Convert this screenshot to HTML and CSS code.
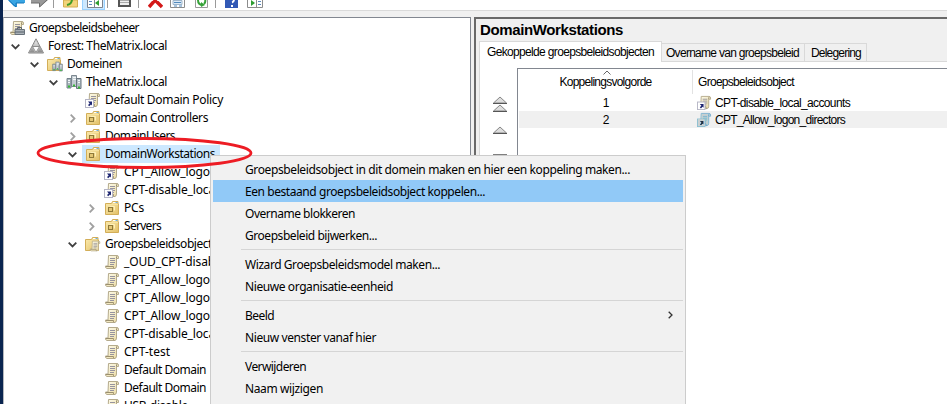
FILE: index.html
```html
<!DOCTYPE html>
<html lang="nl">
<head>
<meta charset="utf-8">
<title>Groepsbeleidsbeheer</title>
<link rel="stylesheet" href="styles.css">
</head>
<body>
<svg class="defs" aria-hidden="true">
  <linearGradient id="paper" x2="1" y2="1"><stop offset="0" stop-color="#fffef0"/><stop offset="1" stop-color="#ead9a0"/></linearGradient>
  <linearGradient id="gold" x2="1" y2="1"><stop offset="0" stop-color="#fcecb0"/><stop offset="1" stop-color="#e2c068"/></linearGradient>
  <linearGradient id="metal" x2="0" y2="1"><stop offset="0" stop-color="#f4f4f4"/><stop offset="1" stop-color="#888"/></linearGradient>
  <symbol id="scroll" viewBox="0 0 16 16">
    <path d="M4.500 1.500H13q2 0 1.500 3h-2v7.500q0 2.500-2 2.500H3q-2-.5-1.500-2.500H4z" fill="url(#paper)" stroke="#b5ab8c"/>
    <path d="M12.500 4.500q-.5-2.500 1-2.500M2 12.500h7.500q-.5 1.500 1 2" fill="none" stroke="#9c906f"/>
    <path d="M6 4.500h5M6 6.500h5M6 8.500h5M6 10.500h4" stroke="#97949e"/>
  </symbol>
  <symbol id="link" viewBox="0 0 16 16">
    <use href="#scroll"/>
    <rect x=".5" y="7.500" width="8" height="8" fill="#fff" stroke="#b5b5c5"/>
    <path d="M3 9.500h4v4L6 12.500l-1.800 1.800-1.200-1.200 1.700-1.700z" fill="#1c2470"/>
  </symbol>
  <symbol id="folder" viewBox="0 0 16 16">
    <path d="M1.500 3.500h6l1-2h5.500v2.500h.5v10.500h-13z" fill="url(#gold)" stroke="#d3ae58"/>
    <path d="M9 2.500h4" stroke="#fff"/><path d="M11.500 2.500h2" stroke="#6ab0e8"/>
  </symbol>
  <symbol id="ou" viewBox="0 0 16 16">
    <use href="#folder"/>
    <path d="M2 4.500h12" stroke="#f8e3a0"/>
    <rect x="4.500" y="7.500" width="4" height="4" fill="#e3c674" stroke="#8f7939"/>
    <path d="M5.500 6.500h5v4" fill="none" stroke="#fff0b8"/>
  </symbol>
  <symbol id="towers" viewBox="0 0 16 16">
    <path d="M5.500 1.500h5v11h-5z" fill="#c3ccd2" stroke="#7c8790"/>
    <path d="M1 4.500h4v9.500H1z" fill="#aab6be" stroke="#75828b"/>
    <path d="M10.500 4.500h4.500v10h-4.500z" fill="#b4bfc6" stroke="#68757e"/>
    <path d="M2 6.500h2M2 8.500h2M7 3.500h3M7 5.500h3M12 6.500h2M12 8.500h2" stroke="#f3f7f8"/>
    <path d="M2 12.500h2M7 11.500h2M12 13.500h2" stroke="#38b838" stroke-width="2"/>
  </symbol>
  <symbol id="domains" viewBox="0 0 16 16">
    <use href="#folder" x="-1"/><use href="#towers" x="5" y="5" width="11" height="11"/>
  </symbol>
  <symbol id="gpos" viewBox="0 0 16 16">
    <use href="#folder" x="-1"/><use href="#scroll" x="4" y="4" width="12" height="12"/>
  </symbol>
  <symbol id="console" viewBox="0 0 16 16">
    <use href="#scroll"/>
    <path d="M6 9.500h9.500v5H6z" fill="#aab1b7" stroke="#68727b"/><path d="M8.500 9V7.500h4V9M6 12h9" fill="none" stroke="#59636c"/>
  </symbol>
  <symbol id="forest" viewBox="0 0 16 16">
    <path d="M8 .8 15.500 15H.5z" fill="#eee" stroke="#858585"/>
    <path d="M8 2 11.500 8.500h-7zM4 9l3 5.500H1.500zM12 9l3 5.500H9z" fill="url(#metal)" stroke="#999" stroke-width=".5"/>
    <path d="M4.500 8.500h7L8 14.500z" fill="#fff" stroke="#777" stroke-width=".8"/>
  </symbol>
  <symbol id="up" viewBox="0 0 16 8"><path d="M8 1 14.500 7H1.500z" fill="#ddd" stroke="#888"/><path d="M1 7.500h14" stroke="#555"/></symbol>
</svg>
<div class="window">
  <div class="toolbar">
    <svg class="tool back" viewBox="0 0 17 9"><path d="M0 0h17v3H9v4L6 6.500z" fill="#39a5e3"/><path d="M.5 0 8 7V3h8" fill="none" stroke="#1474b8"/></svg>
    <svg class="tool forward" viewBox="0 0 17 9"><path d="M0 0h17L9 7V3H0z" fill="#999"/><path d="M0 3h8.500v4L16 0" fill="none" stroke="#6d6d6d"/></svg>
    <i class="split"></i>
    <svg class="tool up" viewBox="0 0 15 9"><path d="M.5 0h14v7H.5z" fill="#f2d47b" stroke="#d4ae50"/><path d="M4 5q5-1 5-6" fill="none" stroke="#3f9c28" stroke-width="2"/></svg>
    <span class="pressed"><svg viewBox="0 0 16 9"><path d="M.5-1h15v8.500H.5z" fill="#fff" stroke="#7c8490"/><path d="M7.500-1v8" stroke="#7c8490"/><path d="M2 1.500h3M2 4.500h3" stroke="#5a89bf"/><path d="m12 0-4 3 4 3z" fill="#2d9d31"/></svg></span>
    <i class="split"></i>
    <svg class="tool sheet" viewBox="0 0 13 9"><path d="M1-2h11v8H1z" fill="#eee" stroke="#555" stroke-width="2"/><path d="M2 .5h9M2 2.500h9" stroke="#aaa"/></svg>
    <i class="split"></i>
    <svg class="tool delete" viewBox="0 0 15 9"><path d="M1 7 9-2M14 7 5-2" stroke="#d31818" stroke-width="3.500"/></svg>
    <svg class="tool props" viewBox="0 0 15 9"><path d="M.5-1h14v8.500H.5z" fill="#fff" stroke="#8c8c8c"/><path d="M3 .5h9v4H3z" fill="#dce9f5" stroke="#9eb6cc"/><path d="M4 2.500h7M4 6h3M9 6h3" stroke="#5089bd"/></svg>
    <svg class="tool refresh" viewBox="0 0 13 9"><path d="M.5-1h12v8.500H.5z" fill="#fff" stroke="#999"/><path d="M3 0q0 5 5 5M10-1q1 3-1 5" fill="none" stroke="#36a238" stroke-width="2"/><path d="m6 2 4 3-4 2z" fill="#36a238"/></svg>
    <i class="split"></i>
    <svg class="tool help" viewBox="0 0 13 9"><path d="M0 0h13v8H0z" fill="#3259b5"/><path d="M9-1q0 3-2 3.500M7 5v2" fill="none" stroke="#fff" stroke-width="2"/></svg>
    <svg class="tool pane" viewBox="0 0 16 9"><path d="M.5-1h15v8.500H.5zM9.500-1v8" fill="#fff" stroke="#8c8c8c"/><path d="M11 1.500h3M11 4.500h3" stroke="#5a89bf"/><path d="m4 0 4 3-4 3z" fill="#2d9d31"/></svg>
  </div>
  <div class="workspace">
    <div class="tree" id="tree"></div>
    <div class="details">
      <h1><span data-width="143">DomainWorkstations</span></h1>
      <div class="tabs">
        <div class="tab active"><span data-width="167">Gekoppelde groepsbeleidsobjecten</span></div>
        <div class="tab second"><span data-width="133">Overname van groepsbeleid</span></div>
        <div class="tab third"><span data-width="50">Delegering</span></div>
      </div>
      <div class="page">
        <div class="order-buttons">
          <div class="double"><svg><use href="#up"/></svg><svg><use href="#up"/></svg></div>
          <svg><use href="#up"/></svg>
          <svg class="down" viewBox="0 0 16 8"><path d="M1 .5h14" stroke="#888"/><path d="M1.500 1h13L8 7z" fill="#ddd" stroke="#777"/></svg>
        </div>
        <div class="list">
          <div class="line head">
            <div class="order"><svg class="sort" viewBox="0 0 8 5"><path d="M.5 4.500 4 1l3.500 3.500" fill="none" stroke="#666"/></svg><span data-width="92">Koppelingsvolgorde</span></div>
            <div class="object"><span data-width="96">Groepsbeleidsobject</span></div>
          </div>
          <div class="line"><div class="order">1</div><div class="object"><svg><use href="#link"/></svg><span data-width="135">CPT-disable_local_accounts</span></div></div>
          <div class="line chosen"><div class="order">2</div><div class="object"><svg><use href="#link"/></svg><span data-width="130">CPT_Allow_logon_directors</span></div></div>
        </div>
      </div>
    </div>
  </div>
</div>
<div class="menu">
  <div class="item"><span data-width="385">Groepsbeleidsobject in dit domein maken en hier een koppeling maken...</span></div>
  <div class="item hover"><span data-width="240">Een bestaand groepsbeleidsobject koppelen...</span></div>
  <div class="item"><span data-width="110">Overname blokkeren</span></div>
  <div class="item"><span data-width="132">Groepsbeleid bijwerken...</span></div>
  <hr>
  <div class="item"><span data-width="195">Wizard Groepsbeleidsmodel maken...</span></div>
  <div class="item"><span data-width="148">Nieuwe organisatie-eenheid</span></div>
  <hr>
  <div class="item"><span data-width="29">Beeld</span><svg viewBox="0 0 5 8"><path d="m.7.700 3.300 3.300L.7 7.300" fill="none" stroke="#333" stroke-width="1.300"/></svg></div>
  <div class="item"><span data-width="131">Nieuw venster vanaf hier</span></div>
  <hr>
  <div class="item"><span data-width="61">Verwijderen</span></div>
  <div class="item"><span data-width="78">Naam wijzigen</span></div>
</div>
<svg class="marker" viewBox="0 0 217 33"><ellipse cx="108.500" cy="16" rx="106.500" ry="14.500"/></svg>
<script src="app.js"></script>
</body>
</html>
```

FILE: styles.css
```css
* { box-sizing: border-box; }
body {
  margin: 0;
  width: 947px;
  height: 404px;
  overflow: hidden;
  position: relative;
  background: #f0f0f0;
  color: #000;
  font: 12px/18px "Noto Sans", "Open Sans", sans-serif;
  white-space: nowrap;
}
svg { display: block; flex: none; }
.defs { position: absolute; width: 0; height: 0; }
[data-width] { display: inline-block; }
.window { height: 404px; border-left: 3px solid #0a2550; display: flex; flex-direction: column; }

.toolbar { height: 11px; flex: none; display: flex; background: #fff; border-bottom: 1px solid #dadada; padding-left: 5px; }
.tool { height: 9px; width: 15px; }
.back, .forward { width: 17px; }
.forward { margin-left: 6px; }
.split { width: 1px; height: 8px; background: #9a9a9a; }
.forward + .split { margin-left: 5px; }
.up { margin-left: 9px; }
.pressed { width: 23px; height: 10px; margin-left: 4px; background: #cce8ff; border: 1px solid #99d1ff; border-top: 0; padding-left: 4px; }
.pressed svg { width: 16px; height: 9px; }
.pressed + .split { margin-left: 2px; }
.sheet { width: 13px; margin-left: 10px; }
.sheet + .split { margin-left: 7px; }
.delete { margin-left: 9px; }
.props { margin-left: 7px; }
.refresh { width: 13px; margin-left: 10px; }
.refresh + .split { margin-left: 7px; }
.help { width: 13px; margin-left: 9px; }
.pane { width: 16px; margin-left: 9px; }

.workspace { flex: 1; min-height: 0; display: flex; padding-top: 6px; }
.tree { width: 468px; flex: none; background: #fff; border: 1px solid #828790; border-bottom: 0; border-left-color: #b5b8bd; padding-top: 1px; overflow: hidden; }
.node { height: 18px; display: flex; align-items: center; }
.indent { flex: none; }
.chevron { width: 9px; height: 9px; margin-right: 5px; fill: none; stroke: #404040; stroke-width: 1.800; }
.chevron.closed { stroke: #a0a0a0; }
.node .icon { width: 16px; height: 16px; }
.label { height: 18px; margin-left: -1px; padding: 0 5px; }
.node.selected .pick { background: #cce8ff; }
.pick { display: flex; align-items: center; height: 18px; padding-left: 3px; }

.details { flex: 1; min-width: 0; margin-left: 3px; border: 2px solid #696969; border-right: 0; border-bottom: 0; padding: 1px 0 0 3px; display: flex; flex-direction: column; font-family: "Liberation Sans", Arial, sans-serif; }
h1 { margin: 0; padding-left: 1px; height: 21px; flex: none; font-size: 15px; line-height: 19px; font-weight: bold; }
.tabs { display: flex; align-items: flex-end; height: 21px; flex: none; margin-bottom: -1px; position: relative; }
.tab { height: 19px; line-height: 19px; border: 1px solid #d9d9d9; border-left: 0; padding-left: 4px; }
.tab.active { width: 183px; height: 21px; line-height: 20px; padding-left: 7px; border-left: 1px solid #d9d9d9; border-bottom: 0; background: #fff; }
.second { width: 143px; }
.third { width: 62px; padding-left: 6px; }
.page { flex: 1; min-height: 0; background: #fff; border: 1px solid #d9d9d9; border-right: 0; border-bottom: 0; display: flex; padding: 6px 0 0 12px; }
.order-buttons { width: 25px; padding-top: 28px; display: flex; flex-direction: column; }
.order-buttons svg { width: 16px; height: 8px; }
.double { height: 30px; }
.order-buttons .down { margin-top: 20px; }
.list { flex: 1; border: 1px solid #828790; border-right: 0; border-bottom: 0; padding: 1px 0 0 1px; }
.line { display: flex; height: 17px; line-height: 19px; }
.line.head { height: 24px; line-height: 24px; }
.order { width: 174px; position: relative; text-align: center; }
.head .order { border-right: 1px solid #e2e2e2; }
.sort { position: absolute; left: 84px; top: 0; width: 8px; height: 5px; }
.object { display: flex; align-items: center; padding-left: 4px; flex: 1; }
.head .object { padding-left: 5px; }
.object svg { width: 15px; height: 15px; margin-right: 3px; }
.object svg + span { padding-top: 2px; }
.chosen { background: #f0f0f0; }
.chosen .object svg { filter: sepia(1) hue-rotate(170deg) saturate(1.600) brightness(.82); }

.menu { position: absolute; left: 210px; top: 155px; width: 476px; height: 262px; background: #f1f1f1; border: 1px solid #ccc; padding: 2px; }
.item { height: 22px; line-height: 21px; padding: 0 10px 0 32px; display: flex; align-items: center; justify-content: space-between; }
.item.hover { background: #91c9f7; }
.item svg { width: 5px; height: 8px; }
.menu hr { height: 1px; border: 0; background: #d5d5d5; margin: 3px 0 3px 28px; }

.marker { position: absolute; left: 36px; top: 137px; width: 217px; height: 33px; }
.marker ellipse { fill: none; stroke: #ed1c24; stroke-width: 2.800; }
```

FILE: app.js
```js
// Tree rows: depth, icon, label, label width, state of the expander
const nodes = [
  [0, "console", "Groepsbeleidsbeheer", 110],
  [1, "forest", "Forest: TheMatrix.local", 119, "open"],
  [2, "domains", "Domeinen", 55, "open"],
  [3, "towers", "TheMatrix.local", 81, "open"],
  [4, "link", "Default Domain Policy", 118],
  [4, "ou", "Domain Controllers", 103, "closed"],
  [4, "ou", "DomainUsers", 70, "closed"],
  [4, "ou", "DomainWorkstations", 110, "open", true],
  [5, "link", "CPT_Allow_logo", 86],
  [5, "link", "CPT-disable_loca", 91],
  [5, "ou", "PCs", 20, "closed"],
  [5, "ou", "Servers", 37, "closed"],
  [4, "gpos", "Groepsbeleidsobject", 107, "open"],
  [5, "scroll", "_OUD_CPT-disab", 91],
  [5, "scroll", "CPT_Allow_logo", 86],
  [5, "scroll", "CPT_Allow_logo", 86],
  [5, "scroll", "CPT_Allow_logo", 86],
  [5, "scroll", "CPT-disable_loca", 91],
  [5, "scroll", "CPT-test", 46],
  [5, "scroll", "Default Domain", 82],
  [5, "scroll", "Default Domain", 82],
  [5, "scroll", "USB-disable", 64]
];
const shapes = { open: "M.7 2.700 4.500 6.500 8.300 2.700", closed: "M2.700.700 6.500 4.500 2.700 8.300" };

document.getElementById("tree").innerHTML = nodes.map(([depth, icon, text, width, state, selected]) => `
  <div class="node${selected ? " selected" : ""}">
    <span class="indent" style="width:${depth * 19 - 12}px${depth ? "" : ";margin-right:2px"}"></span>
    ${depth ? `<svg class="chevron ${state || ""}" viewBox="0 0 9 9">${state ? `<path d="${shapes[state]}"/>` : ""}</svg>` : ""}
    <span class="pick"><svg class="icon"><use href="#${icon}"/></svg><span class="label"><span data-width="${width}">${text}</span></span></span>
  </div>`).join("");

document.querySelectorAll("[data-width]").forEach(el => {
  const natural = el.getBoundingClientRect().width;
  el.style.letterSpacing = (el.dataset.width - natural) / el.textContent.length + "px";
});
```
